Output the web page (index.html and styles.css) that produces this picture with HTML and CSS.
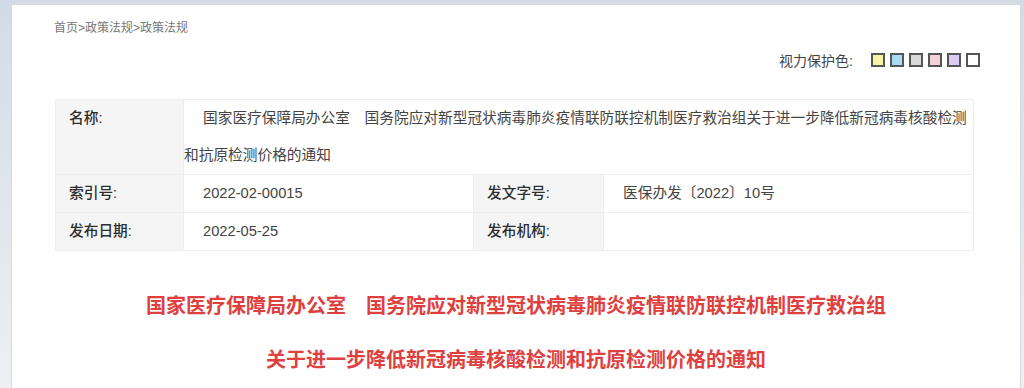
FILE: index.html
```html
<!DOCTYPE html>
<html lang="zh-CN">
<head>
  <meta charset="UTF-8" />
  <meta name="viewport" content="width=device-width, initial-scale=1.0"/>
  <title>政策法规</title>
  <link rel="stylesheet" href="styles.css">
</head>
<body>
  <div class="page">
    <div class="crumbs">首页&gt;政策法规&gt;政策法规</div>

    <div class="eye-colors">
      <span class="eye-label">视力保护色:</span>
      <span class="swatch yellow"></span>
      <span class="swatch blue"></span>
      <span class="swatch gray"></span>
      <span class="swatch pink"></span>
      <span class="swatch purple"></span>
      <span class="swatch white"></span>
    </div>

    <table class="info-table">
      <colgroup>
        <col class="col-label">
        <col class="col-value">
        <col class="col-label2">
        <col>
      </colgroup>
      <tr class="name-row">
        <td class="label">名称:</td>
        <td class="value name" colspan="3">国家医疗保障局办公室　国务院应对新型冠状病毒肺炎疫情联防联控机制医疗救治组关于进一步降低新冠病毒核酸检测和抗原检测价格的通知</td>
      </tr>
      <tr>
        <td class="label">索引号:</td>
        <td class="value">2022-02-00015</td>
        <td class="label">发文字号:</td>
        <td class="value">医保办发〔2022〕10号</td>
      </tr>
      <tr>
        <td class="label">发布日期:</td>
        <td class="value">2022-05-25</td>
        <td class="label">发布机构:</td>
        <td class="value"></td>
      </tr>
    </table>

    <h1 class="doc-title">
      <span>国家医疗保障局办公室　国务院应对新型冠状病毒肺炎疫情联防联控机制医疗救治组</span>
      <span>关于进一步降低新冠病毒核酸检测和抗原检测价格的通知</span>
    </h1>
  </div>
</body>
</html>
```

FILE: styles.css
```css
html, body {
  margin: 0;
  height: 388px;
  overflow: hidden;
}
body {
  background: linear-gradient(to bottom, #d2dbe6, #eef0f2);
  font-family: "Liberation Sans", "Noto Sans CJK SC", sans-serif;
  color: #333;
}
.page {
  box-sizing: border-box;
  width: 1010px;
  height: 384px;
  margin: 4px 0 0 11px;
  background: #fff;
  border: 1px solid #d6d9dc;
  border-bottom: none;
  padding-top: 13px;
}
.crumbs {
  margin-left: 42px;
  font-size: 12px;
  line-height: 20px;
  color: #777;
}
.eye-colors {
  display: flex;
  justify-content: flex-end;
  align-items: center;
  gap: 5px;
  margin-top: 14px;
  padding-right: 40px;
  height: 16px;
}
.eye-label {
  font-size: 14px;
  color: #444;
  margin-right: 13px;
}
.swatch {
  box-sizing: border-box;
  width: 14px;
  height: 14px;
  border: 2px solid #555;
}
.swatch.yellow { background: #f8f4a6; }
.swatch.blue { background: #a9d9f4; }
.swatch.gray { background: #dadada; }
.swatch.pink { background: #f4d0da; }
.swatch.purple { background: #dccbf4; }
.swatch.white { background: #fff; }

.info-table {
  margin: 31px 0 0 43px;
  width: 919px;
  border-collapse: collapse;
  table-layout: fixed;
  font-size: 14.7px;
  line-height: 37px;
}
.col-label { width: 128px; }
.col-value { width: 290px; }
.col-label2 { width: 130px; }
.info-table td {
  border: 1px solid #eee;
  padding: 0;
  vertical-align: top;
}
.info-table .label {
  background: #f5f5f5;
  padding-left: 13px;
  font-weight: 500;
  color: #2e2e2e;
}
.info-table .value {
  padding-left: 19px;
  color: #444;
}
.info-table .value.name {
  padding-left: 0;
  text-indent: 19px;
}
.doc-title {
  margin: 28px 0 0;
  display: flex;
  flex-direction: column;
  align-items: center;
  font-size: 20px;
  line-height: 54px;
  font-weight: bold;
  color: #de4040;
}
```
